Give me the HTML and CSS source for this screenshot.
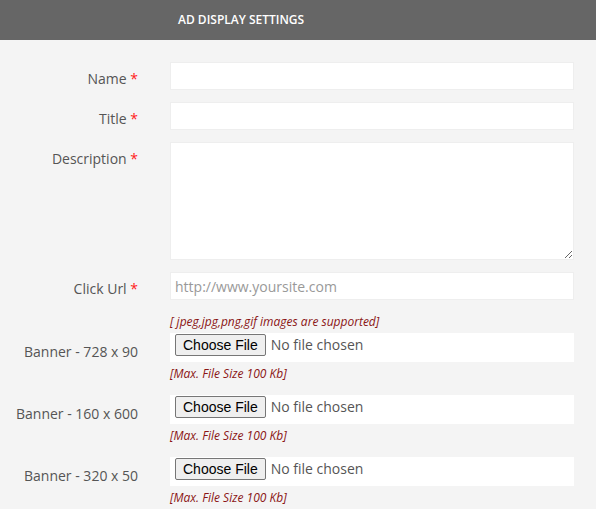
FILE: index.html
```html
<!DOCTYPE html>
<html>
<head>
<meta charset="utf-8">
<link rel="stylesheet" href="styles.css">
</head>
<body>
<header class="topbar"><h1 class="title">AD DISPLAY SETTINGS</h1></header>
<form class="form">
  <div class="row">
    <label class="label">Name <span class="req">*</span></label>
    <div class="field"><input class="text" type="text"></div>
  </div>
  <div class="row gap">
    <label class="label">Title <span class="req">*</span></label>
    <div class="field"><input class="text" type="text"></div>
  </div>
  <div class="row gap">
    <label class="label">Description <span class="req">*</span></label>
    <div class="field"><textarea class="area"></textarea></div>
  </div>
  <div class="row gap">
    <label class="label">Click Url <span class="req">*</span></label>
    <div class="field">
      <input class="text" type="text" placeholder="http://www.yoursite.com">
      <p class="note pre">[ jpeg,jpg,png,gif images are supported]</p>
    </div>
  </div>
  <div class="row first-banner">
    <label class="label banner">Banner - 728 x 90</label>
    <div class="field">
      <input class="file" type="file">
      <p class="note">[Max. File Size 100 Kb]</p>
    </div>
  </div>
  <div class="row banner-gap">
    <label class="label banner">Banner - 160 x 600</label>
    <div class="field">
      <input class="file" type="file">
      <p class="note">[Max. File Size 100 Kb]</p>
    </div>
  </div>
  <div class="row banner-gap">
    <label class="label banner">Banner - 320 x 50</label>
    <div class="field">
      <input class="file" type="file">
      <p class="note">[Max. File Size 100 Kb]</p>
    </div>
  </div>
</form>
</body>
</html>
```
FILE: styles.css
```css
html, body {
  margin: 0;
  padding: 0;
  background: #f4f4f4;
  font-family: "Open Sans", "Liberation Sans", sans-serif;
}
.topbar {
  height: 40px;
  background: #666666;
  display: flex;
  align-items: center;
  padding-left: 178px;
}
.title {
  margin: 0;
  font-size: 12px;
  font-weight: 600;
  color: #ffffff;
  line-height: 40px;
}
.form {
  display: flex;
  flex-direction: column;
  padding-top: 22px;
}
.row {
  display: flex;
  column-gap: 32px;
}
.gap { margin-top: 12px; }
.first-banner { margin-top: 3px; }
.banner-gap { margin-top: 13px; }
.label {
  width: 138px;
  flex: none;
  text-align: right;
  font-size: 14px;
  line-height: 20px;
  color: #555555;
  padding-top: 7px;
  box-sizing: border-box;
}
.label.banner { padding-top: 9px; }
.req { color: #ff1a1a; }
.field {
  width: 404px;
  flex: none;
}
.text, .area {
  display: block;
  width: 404px;
  box-sizing: border-box;
  border: 1px solid #eeeeee;
  background: #ffffff;
  font-family: "Open Sans", sans-serif;
  font-size: 14px;
  color: #555555;
  padding: 0 4px;
  margin: 0;
  outline: none;
}
.text { height: 28px; }
.area {
  height: 118px;
  resize: vertical;
  padding: 4px;
}
.text::placeholder { color: #999999; }
.note {
  margin: 0;
  font-size: 12px;
  line-height: 16px;
  font-style: italic;
  color: #8b1515;
}
.note.pre { margin-top: 14px; }
.file {
  display: block;
  width: 404px;
  height: 29px;
  box-sizing: border-box;
  margin: 0 0 4px;
  padding: 1px 5px 5px;
  border: 0;
  background: #ffffff;
  font-family: "Open Sans", sans-serif;
  font-size: 14px;
  color: #555555;
}
.file::file-selector-button {
  font-family: "Liberation Sans", Arial, sans-serif;
  font-size: 14px;
  color: #000000;
  height: 22px;
  padding: 0 7px;
  margin-right: 5px;
  border: 1px solid #767676;
  border-radius: 2px;
  background: #efefef;
}
```
